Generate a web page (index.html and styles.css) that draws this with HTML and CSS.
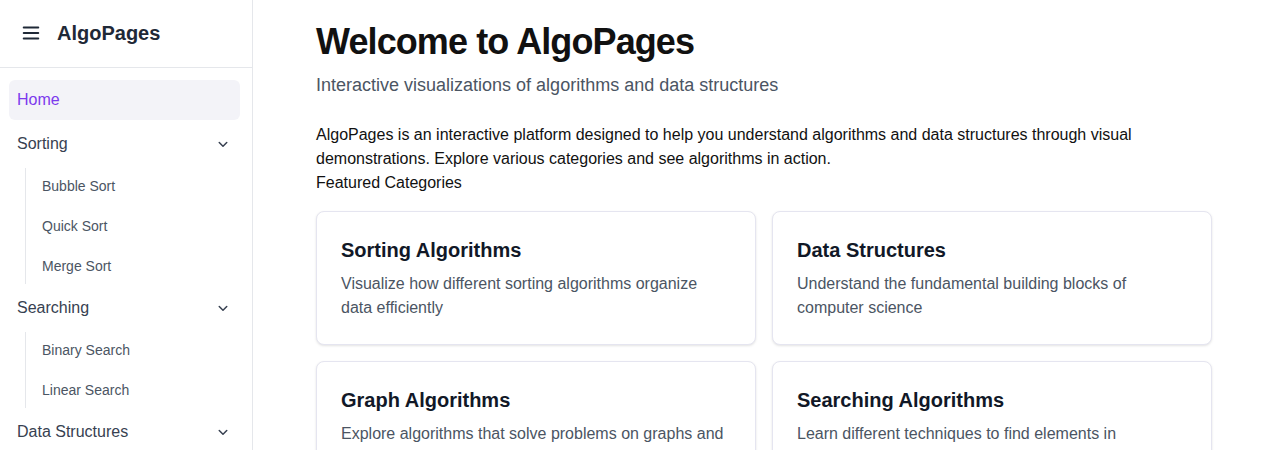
FILE: index.html
```html
<!DOCTYPE html>
<html lang="en">
<head>
<meta charset="utf-8">
<title>AlgoPages</title>
<link rel="stylesheet" href="styles.css">
</head>
<body>
<div class="app">
  <aside class="sidebar">
    <div class="side-header">
      <svg class="menu-icon" width="22" height="22" viewBox="0 0 24 24" fill="none" stroke="currentColor" stroke-width="2" stroke-linecap="round"><line x1="4" y1="6" x2="20" y2="6"/><line x1="4" y1="12" x2="20" y2="12"/><line x1="4" y1="18" x2="20" y2="18"/></svg>
      <span class="brand">AlgoPages</span>
    </div>
    <nav class="nav">
      <a class="nav-home">Home</a>
      <div class="group">
        <div class="group-row"><span>Sorting</span><svg class="chev" width="18" height="18" viewBox="0 0 24 24" fill="none" stroke="currentColor" stroke-width="2" stroke-linecap="round" stroke-linejoin="round"><path d="m7 10 5 5 5-5"/></svg></div>
        <div class="sub">
          <a class="sub-item">Bubble Sort</a>
          <a class="sub-item">Quick Sort</a>
          <a class="sub-item">Merge Sort</a>
        </div>
      </div>
      <div class="group">
        <div class="group-row"><span>Searching</span><svg class="chev" width="18" height="18" viewBox="0 0 24 24" fill="none" stroke="currentColor" stroke-width="2" stroke-linecap="round" stroke-linejoin="round"><path d="m7 10 5 5 5-5"/></svg></div>
        <div class="sub">
          <a class="sub-item">Binary Search</a>
          <a class="sub-item">Linear Search</a>
        </div>
      </div>
      <div class="group">
        <div class="group-row"><span>Data Structures</span><svg class="chev" width="18" height="18" viewBox="0 0 24 24" fill="none" stroke="currentColor" stroke-width="2" stroke-linecap="round" stroke-linejoin="round"><path d="m7 10 5 5 5-5"/></svg></div>
      </div>
    </nav>
  </aside>
  <main class="main">
    <div class="content">
      <h1 class="title">Welcome to AlgoPages</h1>
      <p class="subtitle">Interactive visualizations of algorithms and data structures</p>
      <p class="intro">AlgoPages is an interactive platform designed to help you understand algorithms and data structures through visual demonstrations. Explore various categories and see algorithms in action.</p>
      <div class="featured">Featured Categories</div>
      <div class="cards">
        <div class="card">
          <h2 class="card-title">Sorting Algorithms</h2>
          <p class="card-desc">Visualize how different sorting algorithms organize data efficiently</p>
        </div>
        <div class="card">
          <h2 class="card-title">Data Structures</h2>
          <p class="card-desc">Understand the fundamental building blocks of computer science</p>
        </div>
        <div class="card">
          <h2 class="card-title">Graph Algorithms</h2>
          <p class="card-desc">Explore algorithms that solve problems on graphs and networks</p>
        </div>
        <div class="card">
          <h2 class="card-title">Searching Algorithms</h2>
          <p class="card-desc">Learn different techniques to find elements in collections of data</p>
        </div>
      </div>
    </div>
  </main>
</div>
</body>
</html>
```

FILE: styles.css
```css
* { box-sizing: border-box; }
html, body { margin: 0; padding: 0; }
body {
  font-family: "Liberation Sans", Arial, sans-serif;
  background: #ffffff;
  color: #111111;
  height: 450px;
  overflow: hidden;
}
.app {
  display: flex;
  height: 100vh;
}
.sidebar {
  width: 253px;
  flex: none;
  border-right: 1px solid #e5e7eb;
  background: #ffffff;
}
.side-header {
  height: 68px;
  border-bottom: 1px solid #e5e7eb;
  display: flex;
  align-items: center;
  padding: 0 0 1px 20px;
  gap: 15px;
}
.menu-icon { color: #1f2937; display: block; }
.brand {
  font-size: 20px;
  font-weight: 700;
  color: #1f2937;
  line-height: 28px;
}
.nav {
  display: flex;
  flex-direction: column;
  gap: 4px;
  padding: 12px 12px 0 9px;
}
.nav-home {
  display: flex;
  align-items: center;
  height: 40px;
  padding-left: 8px;
  border-radius: 6px;
  background: #f3f3f8;
  color: #7c3aed;
  font-size: 16px;
}
.group-row {
  display: flex;
  align-items: center;
  justify-content: space-between;
  height: 38px;
  padding: 1px 8px 0 8px;
  font-size: 16px;
  color: #374151;
}
.chev { color: #374151; display: block; }
.sub {
  margin: 6px 0 0 16px;
  border-left: 1px solid #e5e7eb;
  display: flex;
  flex-direction: column;
  gap: 4px;
}
.sub-item {
  display: flex;
  align-items: center;
  height: 36px;
  padding-left: 16px;
  font-size: 14px;
  color: #4b5563;
}
.main {
  flex: 1;
  padding: 22px 0 0 63px;
}
.content { width: 896px; }
.title {
  margin: 0;
  font-size: 36px;
  line-height: 40px;
  font-weight: 700;
  letter-spacing: -0.9px;
  color: #111111;
}
.subtitle {
  margin: 9px 0 0;
  font-size: 18px;
  line-height: 28px;
  color: #4b5563;
}
.intro {
  margin: 24px 0 0;
  font-size: 16px;
  line-height: 24px;
  color: #111111;
}
.featured {
  font-size: 16px;
  line-height: 24px;
  color: #111111;
}
.cards {
  margin-top: 16px;
  display: grid;
  grid-template-columns: 1fr 1fr;
  gap: 16px;
}
.card {
  border: 1px solid #e5e5f0;
  border-radius: 8px;
  padding: 24px;
  background: #ffffff;
  box-shadow: 0 1px 3px rgba(0,0,0,0.08), 0 1px 2px rgba(0,0,0,0.04);
}
.card-title {
  margin: 0;
  font-size: 20px;
  line-height: 28px;
  font-weight: 700;
  color: #111827;
}
.card-desc {
  margin: 8px 0 0;
  font-size: 16px;
  line-height: 24px;
  color: #4b5563;
}
```
